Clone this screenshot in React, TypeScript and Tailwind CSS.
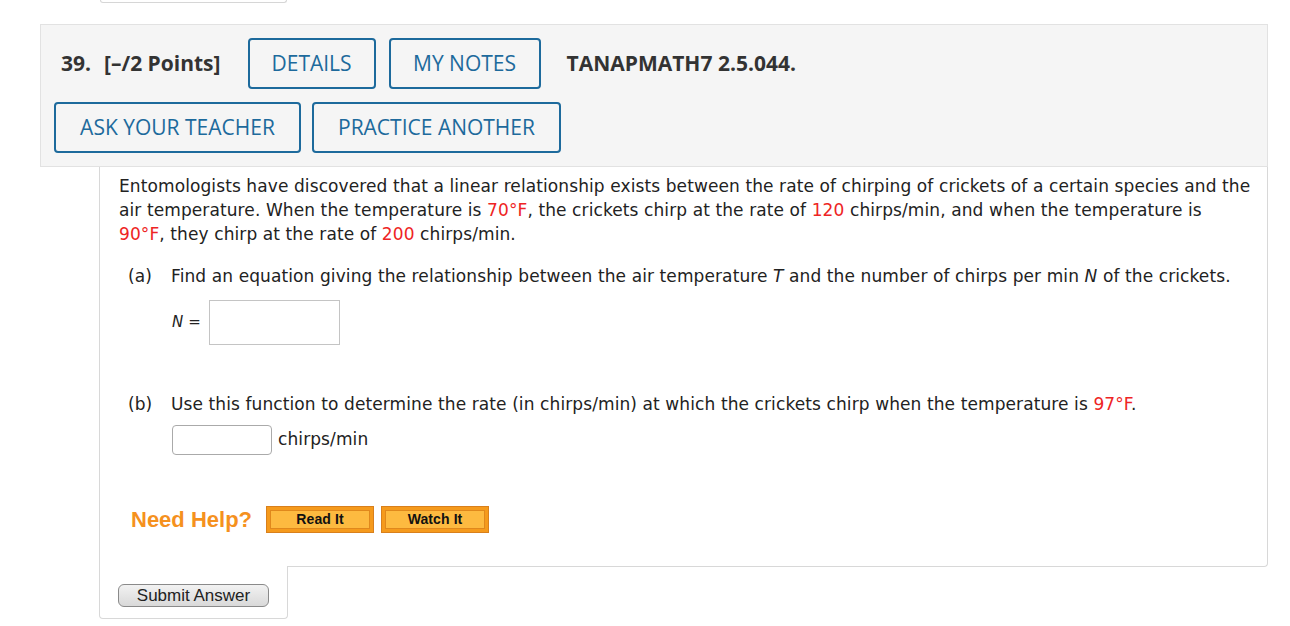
const Red = (props: { children: React.ReactNode }) => (
  <span className="text-[#ee2424]">{props.children}</span>
);

const OutlineButton = (props: { label: string; width: string }) => (
  <div
    className={`${props.width} h-[51px] flex items-center justify-center border-2 border-[#1d6a9c] rounded-[4px] text-[21px] text-[#1d6a9c]`}
  >
    {props.label}
  </div>
);

const HelpButton = (props: { label: string }) => (
  <div className="w-[108px] h-[27px] border border-[#d9801c] bg-[#f59a1c] p-[3px]">
    <div className="w-full h-full border border-[#e0881c] bg-[#fdba40] flex items-center justify-center text-[14px] font-bold text-[#111] font-['Liberation_Sans',sans-serif]">
      {props.label}
    </div>
  </div>
);

export default function App() {
  return (
    <div className="w-[1290px] h-[626px] overflow-hidden bg-white pl-[40px] font-['DejaVu_Sans',sans-serif] text-[#222]">
      <div className="w-[1228px]">
        {/* bottom of previous question's submit tab */}
        <div className="ml-[60px] w-[187px] h-[3px] border-x border-b border-[#d6d6d6] rounded-b-[4px]"></div>

        {/* header */}
        <div className="mt-[21px] bg-[#f5f5f5] border border-[#e2e2e2] pt-[13px] pb-[13px] pl-[13px] font-['Open_Sans',sans-serif]">
          <div className="flex items-center">
            <span className="ml-[7px] text-[21px] font-bold text-[#333]">39.</span>
            <span className="ml-[13px] text-[21px] font-bold text-[#333]">[–/2 Points]</span>
            <div className="ml-[27px]">
              <OutlineButton label="DETAILS" width="w-[128px]" />
            </div>
            <div className="ml-[13px]">
              <OutlineButton label="MY NOTES" width="w-[152px]" />
            </div>
            <span className="ml-[26px] text-[21px] font-bold text-[#333]">TANAPMATH7 2.5.044.</span>
          </div>
          <div className="flex items-center gap-[11px] mt-[13px]">
            <OutlineButton label="ASK YOUR TEACHER" width="w-[247px]" />
            <OutlineButton label="PRACTICE ANOTHER" width="w-[249px]" />
          </div>
        </div>

        {/* question body */}
        <div className="ml-[59px] border-x border-b border-[#d8d8d8] rounded-br-[4px] pt-[7px] pl-[19px] pb-[30px] text-[17px] tracking-[0.1px]">
          <p className="leading-[24px]">
            Entomologists have discovered that a linear relationship exists between the rate of chirping of crickets of a certain species and the
            <br />
            air temperature. When the temperature is <Red>70°F</Red>, the crickets chirp at the rate of <Red>120</Red> chirps/min, and when the temperature is
            <br />
            <Red>90°F</Red>, they chirp at the rate of <Red>200</Red> chirps/min.
          </p>

          <div className="mt-[18px] flex leading-[24px]">
            <span className="ml-[9px] w-[43px] shrink-0">(a)</span>
            <span className="whitespace-nowrap">
              Find an equation giving the relationship between the air temperature <i>T</i> and the number of chirps per min <i>N</i> of the crickets.
            </span>
          </div>
          <div className="mt-[12px] ml-[53px] flex items-center">
            <span className="text-[15px]">
              <i>N</i> =
            </span>
            <div className="ml-[8px] w-[131px] h-[45px] border border-[#c4c4c4] bg-white"></div>
          </div>

          <div className="mt-[47px] flex leading-[24px]">
            <span className="ml-[9px] w-[43px] shrink-0">(b)</span>
            <span className="whitespace-nowrap">
              Use this function to determine the rate (in chirps/min) at which the crickets chirp when the temperature is <Red>97°F</Red>.
            </span>
          </div>
          <div className="mt-[9px] ml-[53px] flex items-center">
            <div className="w-[100px] h-[30px] border border-[#aaa] rounded-[4px] bg-white"></div>
            <span className="ml-[6px]">chirps/min</span>
          </div>

          <div className="mt-[48px] ml-[12px] flex items-center">
            <span className="text-[22px] font-bold text-[#f5911e] font-['Liberation_Sans',sans-serif] tracking-normal">Need Help?</span>
            <div className="ml-[14px]">
              <HelpButton label="Read It" />
            </div>
            <div className="ml-[7px]">
              <HelpButton label="Watch It" />
            </div>
          </div>
        </div>

        {/* submit tab */}
        <div className="ml-[59px] -mt-px w-[189px] h-[53px] bg-white border-x border-b border-[#d8d8d8] rounded-b-[4px] pt-[18px] pl-[18px]">
          <div className="w-[151px] h-[23px] rounded-[6px] border border-[#8a8a8a] bg-gradient-to-b from-[#f2f2f2] to-[#d9d9d9] flex items-center justify-center text-[17px] text-[#222] font-['Liberation_Sans',sans-serif]">
            Submit Answer
          </div>
        </div>
      </div>
    </div>
  );
}
